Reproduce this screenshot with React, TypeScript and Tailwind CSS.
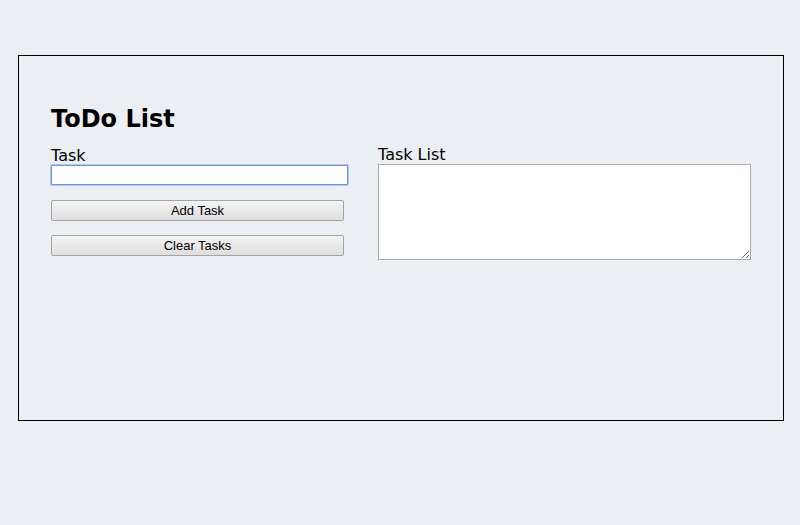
import React from "react";

export default function App() {
  return (
    <div className="w-[800px] h-[525px] bg-[#ebeef3] pt-[55px] pl-[18px]" style={{ fontFamily: '"DejaVu Sans", Verdana, sans-serif' }}>
      <div className="w-[766px] h-[366px] border border-black pt-[49px] pl-[32px] pr-[31px]">
        <h1 className="text-[24px] leading-[28px] font-bold text-black">ToDo List</h1>
        <div className="flex gap-[30px] mt-[13px]">
          <div className="w-[297px] flex flex-col">
            <label className="block text-[16px] leading-[19px] text-black">Task</label>
            <input
              type="text"
              className="w-[297px] h-[20px] bg-white border border-[#6f94e0] shadow-[0_0_0_1px_#b3c7f2] outline-none rounded-[1px]"
            />
            <button
              className="mt-[15px] w-[293px] h-[21px] border border-[#a3a3a3] rounded-[2px] bg-gradient-to-b from-[#f4f4f4] to-[#dedede] text-[13px] text-black leading-none"
              style={{ fontFamily: '"Liberation Sans", Arial, sans-serif' }}
            >
              Add Task
            </button>
            <button
              className="mt-[14px] w-[293px] h-[21px] border border-[#a3a3a3] rounded-[2px] bg-gradient-to-b from-[#f4f4f4] to-[#dedede] text-[13px] text-black leading-none"
              style={{ fontFamily: '"Liberation Sans", Arial, sans-serif' }}
            >
              Clear Tasks
            </button>
          </div>
          <div className="flex-1 flex flex-col">
            <label className="block text-[16px] leading-[18px] text-black">Task List</label>
            <textarea className="block w-[373px] h-[96px] bg-white border border-[#a9a9a9] outline-none resize" />
          </div>
        </div>
      </div>
    </div>
  );
}
